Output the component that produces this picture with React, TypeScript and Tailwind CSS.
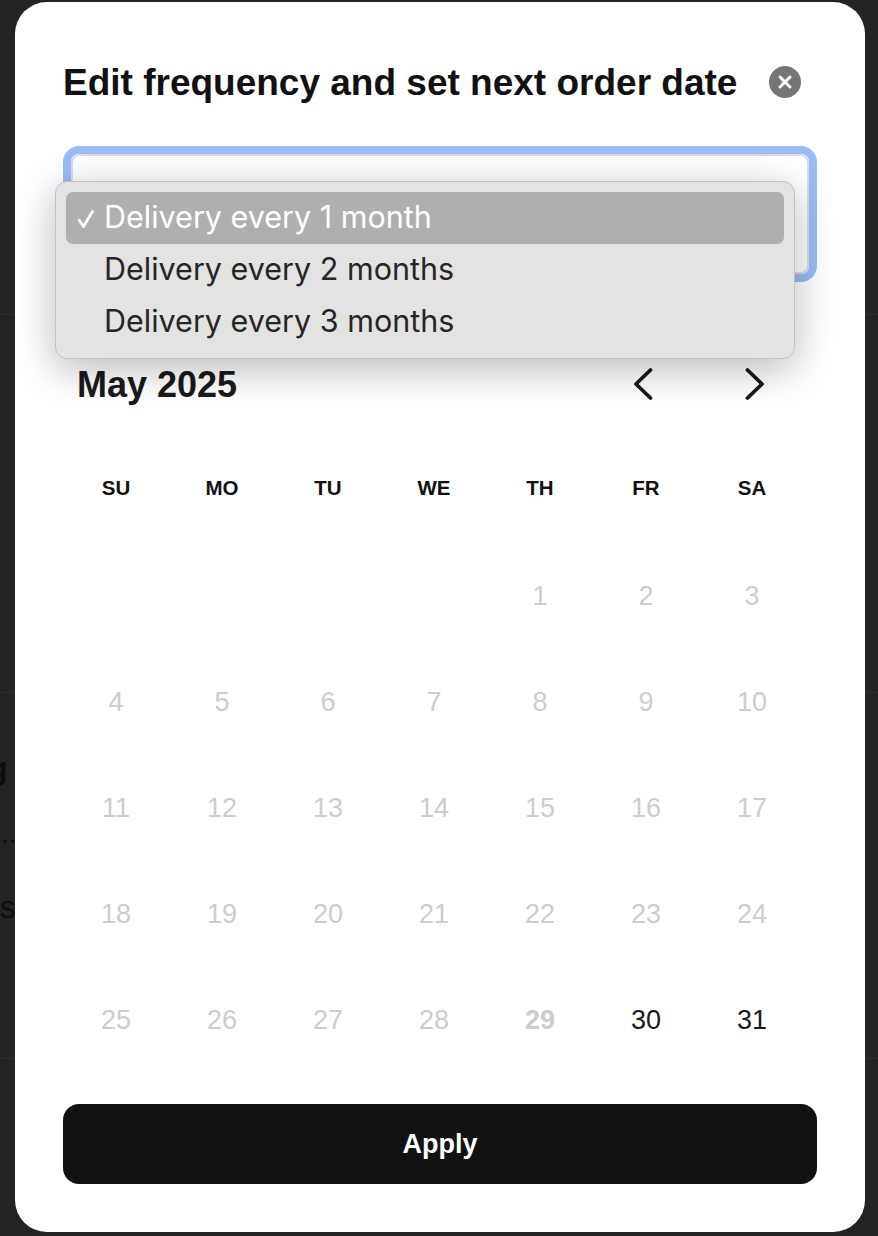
const weekdays = ['SU', 'MO', 'TU', 'WE', 'TH', 'FR', 'SA']
const days = [null, null, null, null, 1, 2, 3, 4, 5, 6, 7, 8, 9, 10, 11, 12, 13, 14, 15, 16, 17, 18, 19, 20, 21, 22, 23, 24, 25, 26, 27, 28, 29, 30, 31]
const options = ['Delivery every 1 month', 'Delivery every 2 months', 'Delivery every 3 months']

function dayClass(day: number) {
  if (day >= 30) return 'text-[#1a1a1a]'
  if (day === 29) return 'text-[#cccccc] font-bold'
  return 'text-[#cccccc]'
}

export default function App() {
  return (
    <div className="relative h-[1236px] w-[878px] overflow-hidden bg-[#232323] font-['Liberation_Sans',sans-serif]">
      {/* page behind the modal */}
      <div className="absolute inset-0 flex flex-col text-[#0c0c0c]">
        <div className="h-[315px] border-b border-[#2d2d2d]" />
        <div className="h-[378px] border-b border-[#2d2d2d]" />
        <div className="flex h-[366px] flex-col items-start border-b border-[#2d2d2d] pt-[59px] leading-none">
          <div className="-ml-[12px] text-[32px] font-bold">g</div>
          <div className="ml-px mt-[36px] text-[28px]">..</div>
          <div className="-ml-[18px] mt-[43px] text-[32px]">es</div>
        </div>
      </div>

      <div className="relative ml-[15px] mt-[2px] h-[1230px] w-[850px] rounded-[32px] bg-white px-12">
        <div className="flex h-[144px] items-start justify-between pr-[16px] pt-[58px]">
          <h2 className="text-[37px] font-bold leading-[46px] text-[#111111]">Edit frequency and set next order date</h2>
          <button className="mt-[6px] flex h-8 w-8 items-center justify-center rounded-full bg-[#767676]">
            <svg width="16" height="16" viewBox="0 0 16 16" fill="none" stroke="white" strokeWidth="3" strokeLinecap="round">
              <path d="M3 3l10 10M13 3L3 13" />
            </svg>
          </button>
        </div>

        <div className="h-[136px] rounded-[16px] border-[8px] border-[#9abdf7] bg-white">
          <div className="h-full rounded-[9px] border-2 border-[#dcdcdc]" />
        </div>

        <div className="mt-[82px] flex h-10 items-center justify-between pl-[14px] pr-[52px]">
          <div className="pt-[2px] text-[36px] font-bold leading-10 text-[#1a1a1a]">May 2025</div>
          <div className="flex items-center gap-[92px] text-[#1a1a1a]">
            <svg width="20" height="34" viewBox="0 0 20 34" fill="none" stroke="currentColor" strokeWidth="3.8" strokeLinecap="round" strokeLinejoin="round">
              <path d="M17.5 3L3 17l14.5 14" />
            </svg>
            <svg width="20" height="34" viewBox="0 0 20 34" fill="none" stroke="currentColor" strokeWidth="3.8" strokeLinecap="round" strokeLinejoin="round">
              <path d="M2.5 3L17 17 2.5 31" />
            </svg>
          </div>
        </div>

        <div className="mt-[64px] grid w-[742px] grid-cols-7">
          {weekdays.map((d) => (
            <div key={d} className="flex h-[40px] items-center justify-center text-[20.5px] font-bold text-[#111111]">
              {d}
            </div>
          ))}
        </div>
        <div className="mt-[35px] grid w-[742px] grid-cols-7 auto-rows-[106px]">
          {days.map((d, i) => (
            <div key={i} className={`flex items-center justify-center text-[27px] ${d ? dayClass(d) : ''}`}>
              {d}
            </div>
          ))}
        </div>

        <button className="mt-[31px] h-20 w-full rounded-2xl bg-[#111111] pt-px text-[27px] font-bold text-white">Apply</button>

        {/* native select menu */}
        <div className="absolute left-[40px] top-[179px] w-[740px] rounded-[12px] border border-[#c2c2c2] bg-[#e3e3e2] p-[10px] font-['Inter',sans-serif] shadow-[0_10px_40px_rgba(0,0,0,0.28)]">
          {options.map((o, i) => (
            <div
              key={o}
              className={`relative flex h-[52px] items-center rounded-[7px] pb-[2px] pl-[38px] text-[30.5px] ${i === 0 ? 'bg-[#afafae] text-white' : 'text-[#262626]'}`}
            >
              {i === 0 && (
                <svg className="absolute left-[10px] top-[17px]" width="20" height="20" viewBox="0 0 20 20" fill="none" stroke="white" strokeWidth="2.8" strokeLinecap="round" strokeLinejoin="round">
                  <path d="M3 11l4.5 6.5L16.5 2.5" />
                </svg>
              )}
              {o}
            </div>
          ))}
        </div>
      </div>
    </div>
  )
}
